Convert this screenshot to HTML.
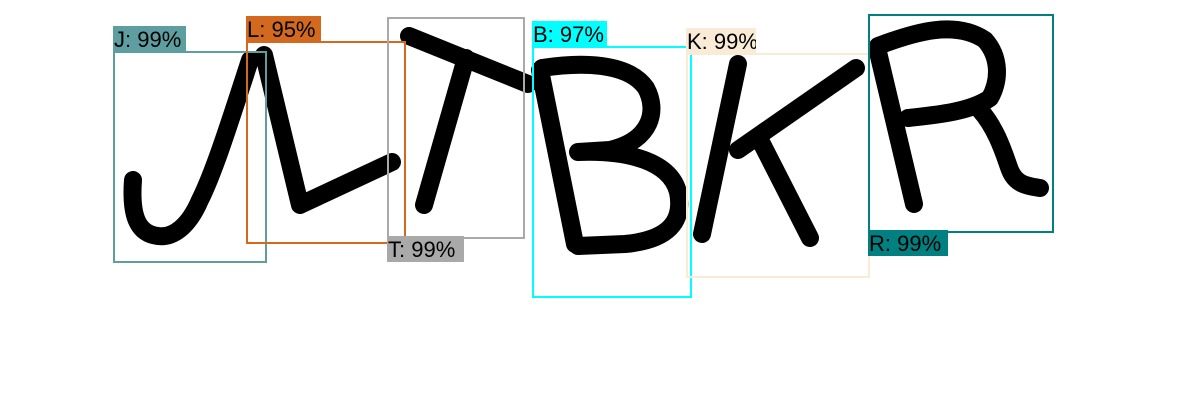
<!DOCTYPE html>
<html><head><style>
body{margin:0;width:1200px;height:420px;background:#fff;position:relative;overflow:hidden;font-family:"Liberation Sans",sans-serif}
.b{position:absolute;box-sizing:border-box;border:2px solid}
.l{position:absolute;font-size:22px;line-height:28px;height:26px;color:#000;padding-left:1px;box-sizing:border-box;white-space:nowrap;overflow:hidden}
svg{position:absolute;left:0;top:0}
</style></head><body>
<svg width="1200" height="420" viewBox="0 0 1200 420" fill="none" stroke="#000" stroke-width="18" stroke-linecap="round" stroke-linejoin="round">
<path d="M250 60 C232 115 215 170 200 200 C188 228 172 238 158 236 C140 234 130 220 133 180"/>
<path d="M264 55 L300 205 L392 162"/>
<path d="M409 36 L528 84 M466 58 L424 205"/>
<path d="M540 70 L575 244 M542 68 C580 62 628 62 646 88 C658 110 652 140 610 150 L578 152 M578 152 C630 150 670 162 678 192 C684 222 668 240 625 244 L578 246"/>
<path d="M738 64 L702 234 M856 68 L738 150 M760 140 L810 238"/>
<path d="M878 52 L914 204 M878 46 C915 32 955 20 985 40 C1000 57 1000 80 990 98 C970 112 935 115 908 118 M980 110 C998 130 1006 160 1010 170 C1016 185 1028 186 1040 188"/>
</svg>
<div class="b" style="left:113px;top:51px;width:154px;height:212px;border-color:#5f9ea0"></div>
<div class="l" style="left:113px;top:26px;width:73px;background:#5f9ea0">J: 99%</div>
<div class="b" style="left:246px;top:41px;width:160px;height:203px;border-color:#d2691e"></div>
<div class="l" style="left:246px;top:16px;width:75px;background:#d2691e">L: 95%</div>
<div class="b" style="left:387px;top:17px;width:138px;height:222px;border-color:#a9a9a9"></div>
<div class="l" style="left:387px;top:236px;width:77px;background:#a9a9a9">T: 99%</div>
<div class="b" style="left:532px;top:46px;width:160px;height:252px;border-color:#00ffff"></div>
<div class="l" style="left:532px;top:21px;width:75px;background:#00ffff">B: 97%</div>
<div class="b" style="left:686px;top:53px;width:184px;height:225px;border-color:#faebd7"></div>
<div class="l" style="left:686px;top:28px;width:70px;background:#faebd7">K: 99%</div>
<div class="b" style="left:868px;top:14px;width:186px;height:219px;border-color:#008080"></div>
<div class="l" style="left:868px;top:230px;width:80px;background:#008080">R: 99%</div>
</body></html>
